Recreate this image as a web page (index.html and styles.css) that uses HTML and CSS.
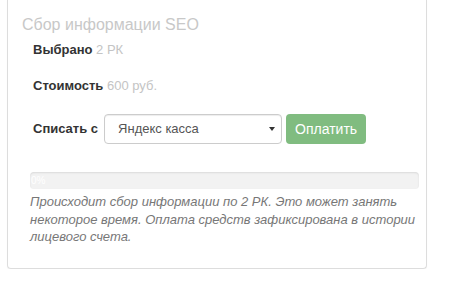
FILE: index.html
```
<!DOCTYPE html>
<html lang="ru">
<head>
<meta charset="utf-8">
<link rel="stylesheet" href="styles.css">
</head>
<body>
<div class="panel">
  <h3 class="title">Сбор информации SEO</h3>
  <div class="rows">
    <div class="row"><b class="label">Выбрано</b> <span class="muted">2 РК</span></div>
    <div class="row row-cost"><b class="label">Стоимость</b> <span class="muted">600 руб.</span></div>
    <div class="row row-pay">
      <b class="label">Списать с</b>
      <div class="select">
        <span>Яндекс касса</span>
        <svg class="caret" width="6" height="4" viewBox="0 0 6 4"><path d="M0 0H6L3 4Z" fill="#333"/></svg>
      </div>
      <button class="btn">Оплатить</button>
    </div>
  </div>
  <div class="progress"><div class="progress-bar">0%</div></div>
  <p class="note">Происходит сбор информации по 2 РК. Это может занять некоторое время. Оплата средств зафиксирована в истории лицевого счета.</p>
</div>
</body>
</html>
```
FILE: styles.css
```
html, body {
  margin: 0;
  padding: 0;
  background: #fff;
}
body {
  font-family: "Liberation Sans", Arial, sans-serif;
  color: #333;
}
.panel {
  margin-left: 7px;
  width: 397px;
  padding: 15px 7px 22px 14px;
  border: 1px solid #ddd;
  border-top: none;
  border-radius: 0 0 4px 4px;
  box-shadow: 0 1px 1px rgba(0, 0, 0, 0.05);
}
.title {
  margin: 0;
  font-size: 16px;
  line-height: 20px;
  font-weight: normal;
  color: #c8c8c8;
}
.rows {
  margin: 5px 0 0 11px;
}
.row {
  font-size: 13px;
  line-height: 20px;
}
.label {
  font-weight: bold;
  color: #333;
}
.muted {
  color: #c4c4c4;
}
.row-cost {
  margin-top: 16px;
}
.row-pay {
  margin-top: 18px;
  display: flex;
  align-items: center;
}
.select {
  margin-left: 6px;
  width: 178px;
  height: 30px;
  box-sizing: border-box;
  border: 1px solid #ccc;
  border-radius: 4px;
  box-shadow: inset 0 1px 1px rgba(0, 0, 0, 0.075);
  padding: 0 6px 0 13px;
  display: flex;
  align-items: center;
  color: #555;
  font-size: 13px;
}
.caret {
  margin-left: auto;
}
.btn {
  margin-left: 4px;
  width: 80px;
  height: 30px;
  border: none;
  border-radius: 4px;
  background: #80bc80;
  color: #fff;
  font-family: "Liberation Sans", Arial, sans-serif;
  font-size: 14px;
  padding: 0;
}
.progress {
  margin: 28px 0 0 8px;
  height: 17px;
  background: #f2f2f2;
  border-radius: 4px;
  box-shadow: inset 0 1px 2px rgba(0, 0, 0, 0.1);
  overflow: hidden;
}
.progress-bar {
  width: 0;
  min-width: 20px;
  font-size: 10px;
  line-height: 17px;
  color: #fff;
  padding-left: 1px;
}
.note {
  margin: 4px 0 0 8px;
  font-size: 13px;
  line-height: 17.5px;
  font-style: italic;
  color: #777;
}
```
